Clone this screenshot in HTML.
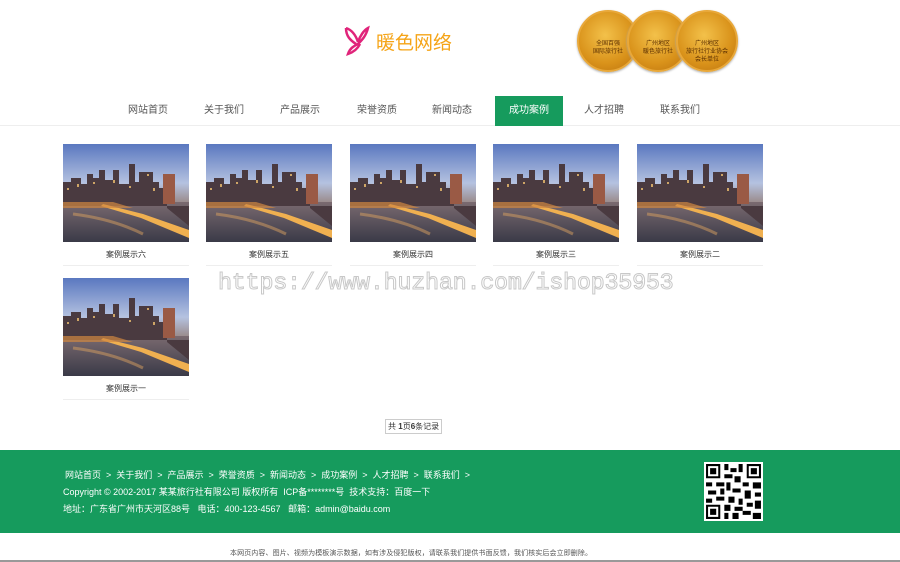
<!DOCTYPE html>
<html><head><meta charset="utf-8"><style>
*{margin:0;padding:0;box-sizing:border-box}
body{width:900px;height:562px;overflow:hidden;background:#fff;font-family:"Liberation Sans","Noto Sans CJK SC",sans-serif;position:relative}
.abs{position:absolute}
.nav{position:absolute;top:96px;left:0;width:900px;height:30px;border-bottom:1px solid #eee}
.nav span{position:absolute;top:0;height:30px;line-height:30px;font-size:10px;color:#555;text-align:center;width:68px}
.nav span.on{background:#169b5d;color:#fff}
.card{position:absolute;width:126px}
.card svg{display:block}
.card p{font-size:8px;color:#333;text-align:center;height:24px;line-height:26px;border-bottom:1px solid #eee}
.foot{position:absolute;top:450px;left:0;width:900px;height:83px;background:#169b5d;color:#fff;font-size:9px;white-space:nowrap}
.medal{position:absolute;top:10px;width:62px;height:62px;border-radius:50%;background:radial-gradient(circle at 45% 40%,#f3c14a,#d9921a 60%,#b9700e);border:2px solid #e8a83a;box-shadow:0 1px 2px #aaa;color:#5a2e00;font-size:6px;text-align:center;line-height:8px;padding-top:28px}
</style></head><body>
<svg width="0" height="0" style="position:absolute"><defs>
<linearGradient id="sky" x1="0" y1="0" x2="0" y2="1"><stop offset="0" stop-color="#5a78c0"/><stop offset=".4" stop-color="#b5c2e0"/><stop offset=".6" stop-color="#9a8a8a"/></linearGradient>
<linearGradient id="wat" x1="0" y1="0" x2="0" y2="1"><stop offset="0" stop-color="#7a6a70"/><stop offset="1" stop-color="#3a3a48"/></linearGradient>
<symbol id="city" viewBox="0 0 126 98">
<rect width="126" height="98" fill="url(#sky)"/>
<rect y="58" width="126" height="40" fill="url(#wat)"/>
<path d="M0 62V38h8v-4h10v6h6v-10h6v4h6v-8h6v10h8v-10h6v14h10V20h6v18h4V28h14v10h6v6h8v20L126 82V62z" fill="#4a3a40"/>
<g fill="#f0c070" opacity=".8"><rect x="4" y="44" width="2" height="2"/><rect x="14" y="40" width="2" height="3"/><rect x="30" y="38" width="2" height="2"/><rect x="50" y="36" width="2" height="3"/><rect x="66" y="42" width="2" height="2"/><rect x="84" y="30" width="2" height="2"/><rect x="90" y="44" width="2" height="3"/></g>
<path d="M40 60l40 10 46 16v8L78 74 38 62z" fill="#f0b050"/>
<path d="M0 58h50l20 6-70 0z" fill="#d08840" opacity=".7"/>
<path d="M10 70q40 5 70 20" stroke="#d8a060" stroke-width="3" fill="none" opacity=".5"/>
<rect x="100" y="30" width="12" height="30" fill="#9a5a45"/>
</symbol></defs></svg>

<svg class="abs" style="left:342px;top:22px" width="30" height="38" viewBox="0 0 30 38"><path d="M4 6c6 2 10 8 12 14M16 20c2-6 6-12 10-14-2 8-6 12-10 16-4 2-8 4-10 10 6-2 10-6 12-10M4 6c0 8 4 12 10 16" stroke="#e0247a" stroke-width="2.5" fill="none"/></svg>
<div class="abs" style="left:376px;top:28px;font-size:19px;color:#f5a417;font-family:'Noto Sans CJK SC',sans-serif">暖色网络</div>
<div class="medal" style="left:577px">全国百强<br>国际旅行社</div>
<div class="medal" style="left:627px">广州地区<br>暖色旅行社</div>
<div class="medal" style="left:676px">广州地区<br>旅行社行业协会<br>会长单位</div>

<div class="nav">
<span style="left:114px">网站首页</span><span style="left:190px">关于我们</span><span style="left:266px">产品展示</span><span style="left:343px">荣誉资质</span><span style="left:418px">新闻动态</span><span class="on" style="left:495px">成功案例</span><span style="left:570px">人才招聘</span><span style="left:646px">联系我们</span>
</div>

<div class="card" style="left:63px;top:144px"><svg width="126" height="98"><use href="#city"/></svg><p>案例展示六</p></div>
<div class="card" style="left:206px;top:144px"><svg width="126" height="98"><use href="#city"/></svg><p>案例展示五</p></div>
<div class="card" style="left:350px;top:144px"><svg width="126" height="98"><use href="#city"/></svg><p>案例展示四</p></div>
<div class="card" style="left:493px;top:144px"><svg width="126" height="98"><use href="#city"/></svg><p>案例展示三</p></div>
<div class="card" style="left:637px;top:144px"><svg width="126" height="98"><use href="#city"/></svg><p>案例展示二</p></div>
<div class="card" style="left:63px;top:278px"><svg width="126" height="98"><use href="#city"/></svg><p>案例展示一</p></div>

<div class="abs" style="left:218px;top:270px;font-size:23.5px;font-family:'Liberation Mono',monospace;-webkit-text-stroke:1px #c8c8c8;color:rgba(255,255,255,.6);white-space:nowrap;letter-spacing:-0.3px">https://www.huzhan.com/ishop35953</div>

<div class="abs" style="left:385px;top:419px;border:1px solid #ccc;font-size:8px;padding:1px 2px;color:#333">共 <b>1</b>页<b>6</b>条记录</div>

<div class="foot">
<div class="abs" style="left:65px;top:18px">网站首页 &nbsp;&gt;&nbsp; 关于我们 &nbsp;&gt;&nbsp; 产品展示 &nbsp;&gt;&nbsp; 荣誉资质 &nbsp;&gt;&nbsp; 新闻动态 &nbsp;&gt;&nbsp; 成功案例 &nbsp;&gt;&nbsp; 人才招聘 &nbsp;&gt;&nbsp; 联系我们 &nbsp;&gt;</div>
<div class="abs" style="left:63px;top:35px">Copyright © 2002-2017 某某旅行社有限公司 版权所有 &nbsp;ICP备********号 &nbsp;技术支持：百度一下</div>
<div class="abs" style="left:63px;top:52px">地址：广东省广州市天河区88号 &nbsp; 电话：400-123-4567 &nbsp; 邮箱：admin@baidu.com</div>
<svg class="abs" style="left:704px;top:12px" width="59" height="59" viewBox="0 0 29 29"><rect width="29" height="29" fill="#fff"/><g fill="#000"><path d="M1 1h7v7H1zM21 1h7v7h-7zM1 21h7v7H1z"/></g><g fill="#fff"><path d="M2 2h5v5H2zM22 2h5v5h-5zM2 22h5v5H2z"/></g><g fill="#000"><path d="M3 3h3v3H3zM23 3h3v3h-3zM3 23h3v3H3zM10 1h2v3h-2zM13 3h3v2h-3zM17 1h2v4h-2zM10 6h4v2h-4zM15 7h3v3h-3zM1 10h3v2H1zM6 10h4v2H6zM11 10h2v4h-2zM19 10h3v2h-3zM24 10h4v3h-4zM2 14h4v2H2zM8 13h2v3H8zM14 13h4v2h-4zM20 14h3v4h-3zM25 15h3v2h-3zM1 18h3v2H1zM6 17h4v2H6zM12 17h3v3h-3zM17 18h2v3h-2zM10 21h3v3h-3zM15 22h4v2h-4zM21 20h3v2h-3zM25 19h3v4h-3zM10 25h2v3h-2zM14 25h3v3h-3zM19 24h4v2h-4zM24 25h4v3h-4z"/></g></svg>
</div>
<div class="abs" style="left:230px;top:548px;font-size:7px;color:#555;white-space:nowrap;letter-spacing:0.1px">本网页内容、图片、视频为模板演示数据，如有涉及侵犯版权，请联系我们提供书面反馈，我们核实后会立即删除。</div>
<div class="abs" style="left:0;top:560px;width:900px;height:2px;background:#999"></div>
</body></html>
